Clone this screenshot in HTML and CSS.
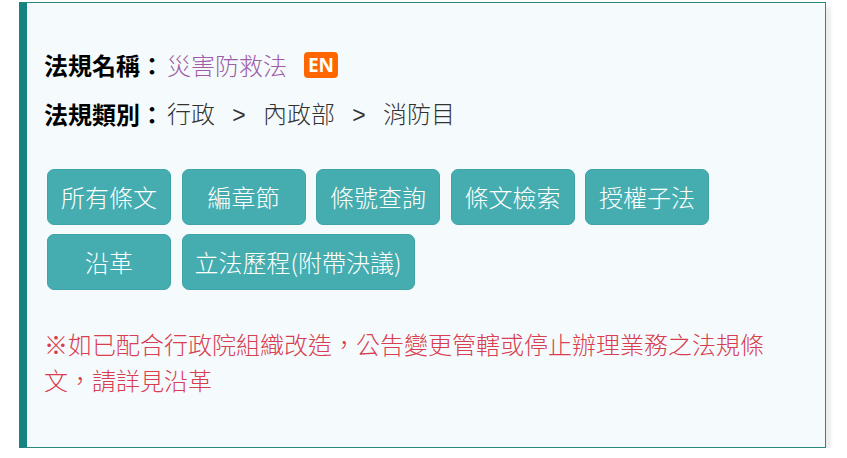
FILE: index.html
```html
<!DOCTYPE html>
<html lang="zh-Hant">
<head>
<meta charset="utf-8">
<title>法規資訊</title>
<link rel="stylesheet" href="styles.css">
</head>
<body>
<div class="law-box">
  <div class="law-row">
    <span class="label">法規名稱：</span><a class="law-name" href="#">災害防救法</a><span class="en-badge">EN</span>
  </div>
  <div class="law-row">
    <span class="label">法規類別：</span><span class="cat">行政<span class="sep">&gt;</span>內政部<span class="sep">&gt;</span>消防目</span>
  </div>
  <div class="btn-group">
    <a class="btn" href="#">所有條文</a>
    <a class="btn" href="#">編章節</a>
    <a class="btn" href="#">條號查詢</a>
    <a class="btn" href="#">條文檢索</a>
    <a class="btn" href="#">授權子法</a>
    <a class="btn" href="#">沿革</a>
    <a class="btn" href="#">立法歷程(附帶決議)</a>
  </div>
  <p class="notice">※如已配合行政院組織改造，公告變更管轄或停止辦理業務之法規條文，請詳見沿革</p>
</div>
</body>
</html>
```

FILE: styles.css
```css
html, body {
  margin: 0;
  padding: 0;
  background: #ffffff;
}

body {
  font-family: "Noto Sans CJK TC", "Noto Sans", sans-serif;
  font-size: 24px;
  font-weight: 300;
  color: #333333;
}

.law-box {
  box-sizing: border-box;
  margin: 2px 0 0 19px;
  width: 807px;
  height: 446px;
  background: #f5fbfc;
  border: 1px solid #2a8a7e;
  border-left: 8px solid #158380;
  box-shadow: 5px 5px 3px rgba(0, 0, 0, 0.07);
  padding: 44px 20px 0 17px;
}

.law-row {
  line-height: 36px;
  height: 36px;
  margin-bottom: 13px;
  display: flex;
  align-items: center;
  white-space: nowrap;
}

.label {
  font-weight: bold;
  color: #000000;
  margin-right: 3px;
}

.law-name {
  color: #a05ca8;
  text-decoration: none;
}

.en-badge {
  display: inline-flex;
  align-items: center;
  justify-content: center;
  width: 34px;
  height: 26px;
  margin-left: 17px;
  border-radius: 4px;
  background: #ff6600;
  color: #ffffff;
  font-family: "Open Sans", "Liberation Sans", sans-serif;
  font-weight: bold;
  font-size: 19px;
  line-height: 26px;
}

.cat {
  color: #333333;
}

.sep {
  display: inline-block;
  width: 48px;
  text-align: center;
  font-family: "Liberation Sans", sans-serif;
  font-weight: normal;
  font-size: 23px;
}

.btn-group {
  display: flex;
  flex-wrap: wrap;
  gap: 9px 10.5px;
  margin-top: 37px;
  padding-left: 3px;
  width: 690px;
}

.btn {
  box-sizing: border-box;
  min-width: 124px;
  height: 56px;
  padding: 0 12px;
  display: inline-flex;
  align-items: center;
  justify-content: center;
  background: #45adb0;
  border: 1px solid #3ea4a7;
  border-radius: 7px;
  color: #ffffff;
  text-decoration: none;
  line-height: 36px;
  white-space: nowrap;
}

.notice {
  margin: 36px 0 0 0;
  color: #d83d50;
  line-height: 36px;
}
```
